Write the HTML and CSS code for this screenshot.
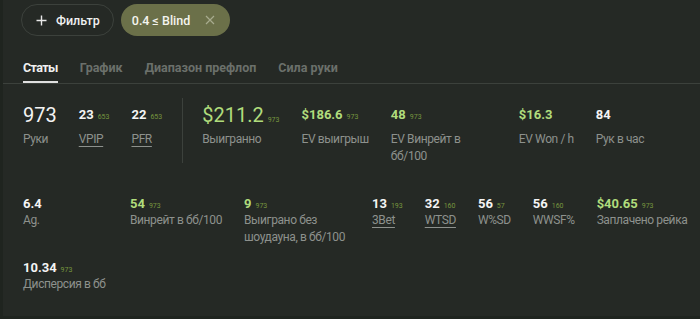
FILE: index.html
```html
<!DOCTYPE html>
<html lang="ru">
<head>
  <meta charset="UTF-8">
  <meta name="viewport" content="width=device-width, initial-scale=1.0">
  <title>Статы</title>
  <link rel="stylesheet" href="styles.css">
</head>
<body>
  <div class="page">

    <div class="filters">
      <button class="filter-btn" type="button">
        <svg width="11" height="11" viewBox="0 0 11 11"><path d="M5.5 0.5v10M0.5 5.5h10" stroke="#e8e8e8" stroke-width="1.4" fill="none"/></svg>
        Фильтр
      </button>
      <span class="chip">
        0.4 ≤ Blind
        <svg width="10" height="10" viewBox="0 0 10 10"><path d="M1 1l8 8M9 1l-8 8" stroke="#a7ab8e" stroke-width="1.2" fill="none"/></svg>
      </span>
    </div>

    <nav class="tabs">
      <a class="tab active">Статы</a>
      <a class="tab">График</a>
      <a class="tab">Диапазон префлоп</a>
      <a class="tab">Сила руки</a>
    </nav>

    <section class="stats">
      <div class="stat-row top">
        <div class="stat">
          <div class="value"><span class="num big">973</span></div>
          <div class="label">Руки</div>
        </div>
        <div class="stat">
          <div class="value"><span class="num">23</span><span class="count">653</span></div>
          <div class="label link">VPIP</div>
        </div>
        <div class="stat">
          <div class="value"><span class="num">22</span><span class="count">653</span></div>
          <div class="label link">PFR</div>
        </div>
        <div class="divider"></div>
        <div class="stat">
          <div class="value"><span class="num big green">$211.2</span><span class="count">973</span></div>
          <div class="label">Выигранно</div>
        </div>
        <div class="stat">
          <div class="value"><span class="num green">$186.6</span><span class="count">973</span></div>
          <div class="label">EV выигрыш</div>
        </div>
        <div class="stat">
          <div class="value"><span class="num green">48</span><span class="count">973</span></div>
          <div class="label">EV Винрейт в бб/100</div>
        </div>
        <div class="stat">
          <div class="value"><span class="num green">$16.3</span></div>
          <div class="label">EV Won / h</div>
        </div>
        <div class="stat">
          <div class="value"><span class="num">84</span></div>
          <div class="label">Рук в час</div>
        </div>
      </div>

      <div class="stat-row wrap">
        <div class="stat first">
          <div class="value"><span class="num">6.4</span></div>
          <div class="label">Ag.</div>
        </div>
        <div class="stat">
          <div class="value"><span class="num green">54</span><span class="count">973</span></div>
          <div class="label">Винрейт в бб/100</div>
        </div>
        <div class="stat">
          <div class="value"><span class="num green">9</span><span class="count">973</span></div>
          <div class="label">Выиграно без шоудауна, в бб/100</div>
        </div>
        <div class="stat">
          <div class="value"><span class="num">13</span><span class="count">193</span></div>
          <div class="label link">3Bet</div>
        </div>
        <div class="stat">
          <div class="value"><span class="num">32</span><span class="count">160</span></div>
          <div class="label link">WTSD</div>
        </div>
        <div class="stat">
          <div class="value"><span class="num">56</span><span class="count">57</span></div>
          <div class="label">W%SD</div>
        </div>
        <div class="stat">
          <div class="value"><span class="num">56</span><span class="count">160</span></div>
          <div class="label">WWSF%</div>
        </div>
        <div class="stat">
          <div class="value"><span class="num green">$40.65</span><span class="count">973</span></div>
          <div class="label">Заплачено рейка</div>
        </div>
        <div class="stat">
          <div class="value"><span class="num">10.34</span><span class="count">973</span></div>
          <div class="label">Дисперсия в бб</div>
        </div>
      </div>
    </section>

  </div>
</body>
</html>
```

FILE: styles.css
```css
body {
  margin: 0;
  background-color: #1f241f;
  font-family: Roboto, "Noto Sans", sans-serif;
  color: #f0f0f0;
}

.page {
  height: 316px;
  margin-left: 3px;
  background-color: #252925;
  overflow: hidden;
}

.filters {
  display: flex;
  gap: 7px;
  padding: 4px 0 0 18px;
}

.filter-btn {
  display: flex;
  align-items: center;
  gap: 9px;
  height: 32px;
  padding: 0 13px 0 14px;
  background: transparent;
  border: 1px solid #3c413c;
  border-radius: 16px;
  color: #f0f0f0;
  font-family: inherit;
  font-size: 12.5px;
  font-weight: 500;
}

.chip {
  display: flex;
  align-items: center;
  gap: 15px;
  height: 32px;
  padding: 0 15px 0 11px;
  background-color: #6b7049;
  border-radius: 16px;
  color: #f4f4ee;
  font-size: 12.5px;
  font-weight: 500;
}

.tabs {
  display: flex;
  gap: 22px;
  margin-top: 17px;
  padding-left: 20px;
  border-bottom: 1px solid #3c413c;
}

.tab {
  padding: 6px 0 4px;
  font-size: 12.5px;
  font-weight: 700;
  line-height: 18px;
  color: #6b706b;
  border-bottom: 2px solid transparent;
}

.tab.active {
  color: #f0f0f0;
  letter-spacing: -0.6px;
  border-bottom-color: #e0e0e0;
}

.stats {
  padding: 14px 0 0 20px;
}

.stat-row {
  display: flex;
  column-gap: 22px;
}

.stat-row.top .stat {
  margin-top: 5px;
}

.stat-row.wrap {
  flex-wrap: wrap;
  row-gap: 13px;
  margin-top: 30px;
  width: 675px;
}

.stat {
  max-width: 106px;
}

.stat.first {
  min-width: 85px;
}

.value {
  display: flex;
  align-items: baseline;
  gap: 4px;
  height: 17px;
  line-height: 17px;
  white-space: nowrap;
}

.stat-row.top .value {
  height: 24px;
  line-height: 24px;
}

.num {
  font-size: 13px;
  font-weight: 700;
  color: #f4f4f4;
}

.num.big {
  font-size: 20px;
  font-weight: 400;
}

.num.green {
  color: #b0dc7c;
}

.count {
  font-size: 7px;
  color: #77963f;
}

.label {
  margin-top: 4px;
  font-size: 12px;
  letter-spacing: -0.4px;
  line-height: 17px;
  color: #8d918d;
}

.stat-row.wrap .label {
  margin-top: 0;
}

.label.link {
  text-decoration: underline;
  text-underline-offset: 3px;
}

.divider {
  width: 1px;
  height: 65px;
  margin: 0 -3px 0 -2px;
  background-color: #3c413c;
}
```
